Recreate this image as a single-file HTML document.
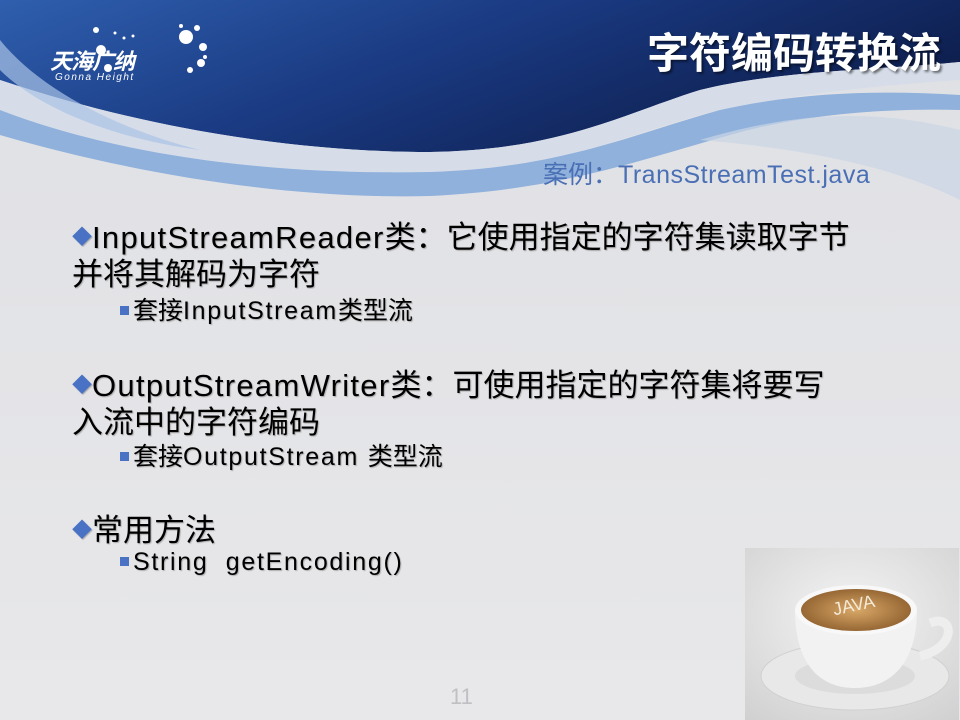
<!DOCTYPE html>
<html><head><meta charset="utf-8"><style>
html,body{margin:0;padding:0}
body{width:960px;height:720px;position:relative;overflow:hidden;background:#e4e4e6;font-family:"Liberation Sans","Noto Sans CJK SC",sans-serif}
.t{position:absolute;white-space:nowrap;color:#000;text-shadow:1px 1px 1px rgba(0,0,0,0.25)}
.l1{font-size:31px}
.l2{font-size:25px}
.l1 i{font-style:normal;letter-spacing:1.3px}
.l2 i{font-style:normal;letter-spacing:1.7px}
.d{color:#4a72c4;font-size:20px;position:relative;top:-4px}
.s{display:inline-block;width:9px;height:9px;background:#4a72c4;margin-right:4px;position:relative;top:-4px}
</style></head><body>
<svg width="960" height="720" style="position:absolute;left:0;top:0">
<defs>
<linearGradient id="g" x1="0" y1="0" x2="1" y2="0.4">
<stop offset="0" stop-color="#2f5fae"/><stop offset="0.5" stop-color="#1a3a82"/><stop offset="1" stop-color="#0e1f4f"/>
</linearGradient>
<linearGradient id="bg" x1="0" y1="0" x2="0" y2="1">
<stop offset="0" stop-color="#dfe0e4"/><stop offset="1" stop-color="#e8e8ea"/>
</linearGradient>
</defs>
<rect width="960" height="720" fill="url(#bg)"/>
<path d="M0 0H960V62C880 70 780 70 700 90C620 115 560 150 430 152C300 152 150 130 0 80Z" fill="url(#g)"/>
<path d="M0 80C150 130 300 152 430 152C560 150 620 115 700 90C780 70 880 70 960 62V80C880 85 790 95 720 110C620 135 560 170 430 178C290 182 130 160 0 120Z" fill="#d6dde9"/>
<path d="M0 110C130 160 290 175 430 172C560 168 630 135 720 110C800 92 880 90 960 95V110C880 108 800 115 730 135C640 160 560 190 430 196C280 200 120 170 0 135Z" fill="#8fb1dc"/>
<path d="M0 40C40 90 120 130 200 150C120 140 40 110 0 70Z" fill="#a9c3e6" opacity="0.7"/>
<path d="M700 140C800 110 880 110 960 130V200C900 170 820 150 700 140Z" fill="#cbd6e6" opacity="0.7"/>
<g fill="#fff">
<circle cx="96" cy="30" r="3"/><circle cx="101" cy="50" r="5"/><circle cx="108" cy="68" r="4"/>
<circle cx="186" cy="37" r="7"/><circle cx="197" cy="28" r="3"/><circle cx="203" cy="47" r="4"/><circle cx="201" cy="63" r="4"/><circle cx="190" cy="70" r="3"/><circle cx="181" cy="26" r="2"/><circle cx="205" cy="57" r="2"/>
<circle cx="115" cy="33" r="1.5"/><circle cx="124" cy="38" r="1.5"/><circle cx="133" cy="36" r="1.5"/>
</g>
</svg>
<div class="t" style="left:50px;top:44px;font-size:22px;font-weight:bold;font-style:italic;color:#fff;text-shadow:none;letter-spacing:-1px">天海广纳</div>
<div class="t" style="left:55px;top:72px;font-size:10px;font-style:italic;color:#fff;text-shadow:none;letter-spacing:1.5px">Gonna Height</div>
<div class="t" style="left:647px;top:20px;font-size:42px;font-weight:bold;color:#fff;text-shadow:2px 2px 2px rgba(0,0,0,0.5)">字符编码转换流</div>
<div class="t" style="left:543px;top:155px;font-size:25px;color:#4a6fb4;text-shadow:none">案例：<span style="letter-spacing:0.5px">TransStreamTest.java</span></div>

<div class="t l1" style="left:72px;top:212px"><span class="d">◆</span><i>InputStreamReader</i>类：它使用指定的字符集读取字节</div>
<div class="t l1" style="left:72px;top:249px">并将其解码为字符</div>
<div class="t l2" style="left:120px;top:291px"><span class="s"></span>套接<i>InputStream</i>类型流</div>

<div class="t l1" style="left:72px;top:360px"><span class="d">◆</span><i>OutputStreamWriter</i>类：可使用指定的字符集将要写</div>
<div class="t l1" style="left:72px;top:397px">入流中的字符编码</div>
<div class="t l2" style="left:120px;top:437px"><span class="s"></span>套接<i>OutputStream </i>类型流</div>

<div class="t l1" style="left:72px;top:505px"><span class="d">◆</span>常用方法</div>
<div class="t l2" style="left:120px;top:548px"><span class="s"></span><i>String&nbsp; getEncoding()</i></div>

<div class="t" style="left:450px;top:684px;font-size:22px;color:#c0c0c4;text-shadow:none">11</div>

<svg width="214" height="172" style="position:absolute;left:745px;top:548px">
<defs>
<radialGradient id="pb" cx="0.5" cy="0.4" r="0.8"><stop offset="0" stop-color="#f4f4f4"/><stop offset="1" stop-color="#cfcfd0"/></radialGradient>
<radialGradient id="cf" cx="0.5" cy="0.5" r="0.6"><stop offset="0" stop-color="#d8a868"/><stop offset="1" stop-color="#8a5a2a"/></radialGradient>
</defs>
<rect width="214" height="172" fill="url(#pb)"/>
<ellipse cx="110" cy="128" rx="94" ry="34" fill="#e8e8e8" stroke="#d0d0d0"/>
<ellipse cx="110" cy="128" rx="60" ry="18" fill="#dcdcdc"/>
<path d="M185 75C210 65 212 100 175 108" fill="none" stroke="#eee" stroke-width="9"/>
<path d="M50 62C50 110 70 140 110 140C150 140 172 110 172 62Z" fill="#f2f2f2"/>
<ellipse cx="111" cy="62" rx="61" ry="25" fill="#f8f8f8"/>
<ellipse cx="111" cy="62" rx="55" ry="21" fill="url(#cf)"/>
<text x="88" y="65" font-family="Liberation Sans" font-size="18" fill="#f4ead8" transform="rotate(-12 100 60)">JAVA</text>
</svg>
</body></html>
